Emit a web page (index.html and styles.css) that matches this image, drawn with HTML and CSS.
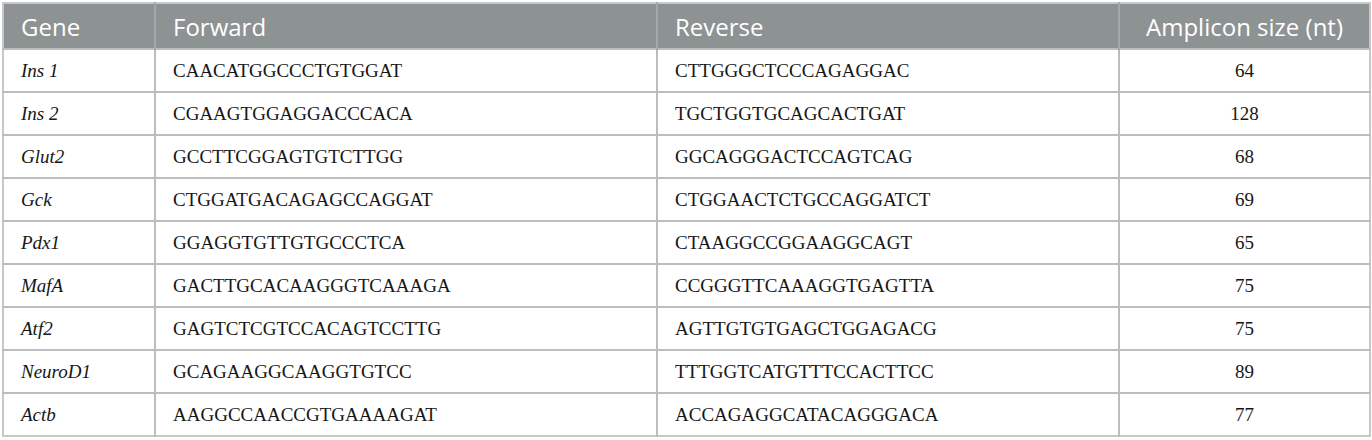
FILE: index.html
```html
<!DOCTYPE html>
<html>
<head>
<meta charset="utf-8">
<link rel="stylesheet" href="styles.css">
</head>
<body>
<div class="wrap">
<table class="primers">
  <colgroup>
    <col class="c-gene"><col class="c-fwd"><col class="c-rev"><col class="c-size">
  </colgroup>
  <thead>
    <tr><th>Gene</th><th>Forward</th><th>Reverse</th><th class="center">Amplicon size (nt)</th></tr>
  </thead>
  <tbody>
    <tr><td class="gene">Ins 1</td><td>CAACATGGCCCTGTGGAT</td><td>CTTGGGCTCCCAGAGGAC</td><td class="center">64</td></tr>
    <tr><td class="gene">Ins 2</td><td>CGAAGTGGAGGACCCACA</td><td>TGCTGGTGCAGCACTGAT</td><td class="center">128</td></tr>
    <tr><td class="gene">Glut2</td><td>GCCTTCGGAGTGTCTTGG</td><td>GGCAGGGACTCCAGTCAG</td><td class="center">68</td></tr>
    <tr><td class="gene">Gck</td><td>CTGGATGACAGAGCCAGGAT</td><td>CTGGAACTCTGCCAGGATCT</td><td class="center">69</td></tr>
    <tr><td class="gene">Pdx1</td><td>GGAGGTGTTGTGCCCTCA</td><td>CTAAGGCCGGAAGGCAGT</td><td class="center">65</td></tr>
    <tr><td class="gene">MafA</td><td>GACTTGCACAAGGGTCAAAGA</td><td>CCGGGTTCAAAGGTGAGTTA</td><td class="center">75</td></tr>
    <tr><td class="gene">Atf2</td><td>GAGTCTCGTCCACAGTCCTTG</td><td>AGTTGTGTGAGCTGGAGACG</td><td class="center">75</td></tr>
    <tr><td class="gene">NeuroD1</td><td>GCAGAAGGCAAGGTGTCC</td><td>TTTGGTCATGTTTCCACTTCC</td><td class="center">89</td></tr>
    <tr><td class="gene">Actb</td><td>AAGGCCAACCGTGAAAAGAT</td><td>ACCAGAGGCATACAGGGACA</td><td class="center">77</td></tr>
  </tbody>
</table>
</div>
</body>
</html>
```
FILE: styles.css
```css
html, body {
  margin: 0;
  padding: 0;
  background: #ffffff;
}
.wrap {
  padding: 2px 3px 0 2px;
}
.primers {
  width: 1367px;
  border-collapse: collapse;
  table-layout: fixed;
  border: 2px solid #c6c9c9;
}
.c-gene { width: 152px; }
.c-fwd { width: 502px; }
.c-rev { width: 462px; }
.c-size { width: 251px; }
.primers th {
  background: #8d9293;
  color: #ffffff;
  font-family: "Open Sans", "Noto Sans", sans-serif;
  font-weight: 400;
  font-size: 24px;
  text-align: left;
  height: 46px;
  padding: 0 0 0 17px;
  box-sizing: border-box;
  border-left: 2px solid #a3a7a8;
  vertical-align: middle;
}
.primers th:first-child { border-left: none; }
.primers td {
  font-family: "Liberation Serif", "Times New Roman", serif;
  font-size: 19px;
  color: #161616;
  height: 43px;
  padding: 0 0 0 17px;
  box-sizing: border-box;
  border-top: 2px solid #bdbdbd;
  border-left: 2px solid #bdbdbd;
  vertical-align: middle;
}
.primers td:first-child { border-left: none; }
.primers .center {
  text-align: center;
  padding: 0;
}
.primers .gene { font-style: italic; }
```
